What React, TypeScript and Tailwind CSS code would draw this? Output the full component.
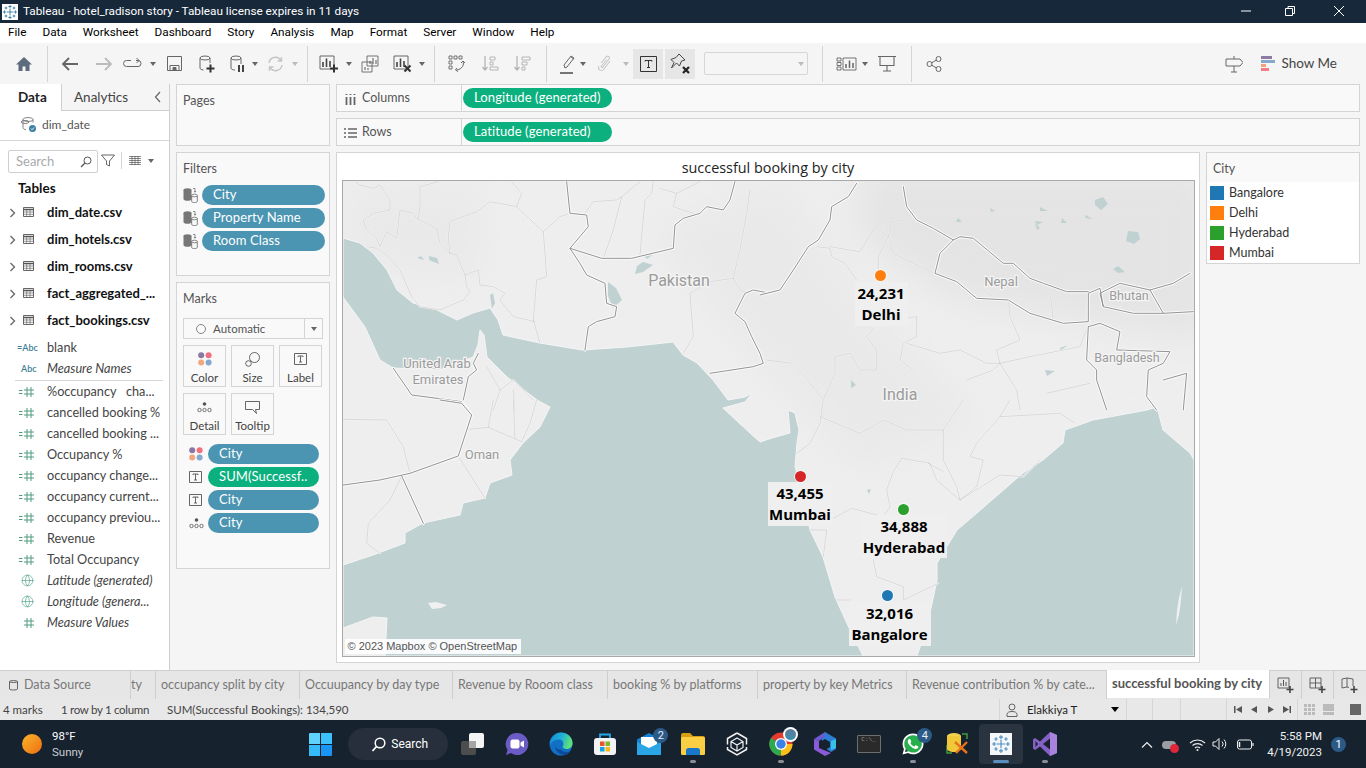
import type { ReactNode } from "react";
import { Globe } from "lucide-react";
import { FaWhatsapp } from "react-icons/fa";

const ui = "font-['Lato','Open_Sans',sans-serif]";
const win = "font-['Roboto','Open_Sans',sans-serif]";

function Icon({ w = 20, h = 20, box, className = "", children }: { w?: number; h?: number; box?: string; className?: string; children: ReactNode }) {
  return (
    <svg width={w} height={h} viewBox={box || `0 0 ${w} ${h}`} fill="none" stroke="currentColor" className={"shrink-0 " + className}>
      {children}
    </svg>
  );
}

function Caret({ light }: { light?: boolean }) {
  return <div className={"w-0 h-0 border-x-[3.5px] border-x-transparent border-t-[4px] " + (light ? "border-t-[#bbb]" : "border-t-[#666]")} />;
}

function Sep({ className = "" }: { className?: string }) {
  return <div className={"w-px h-[36px] bg-[#d4d4d4] " + className} />;
}

function TableauMark({ size = 16, color = "#3b7ea1" }: { size?: number; color?: string }) {
  const pts: [number, number, number][] = [[8, 8, 3.4], [8, 2.5, 1.6], [8, 13.5, 1.6], [2.5, 8, 1.6], [13.5, 8, 1.6], [4, 4, 1.4], [12, 4, 1.4], [4, 12, 1.4], [12, 12, 1.4]];
  return (
    <svg width={size} height={size} viewBox="0 0 16 16" stroke={color} strokeWidth="0.9">
      {pts.map(([x, y, r], i) => (
        <path key={i} d={`M${x - r} ${y}H${x + r}M${x} ${y - r}V${y + r}`} />
      ))}
    </svg>
  );
}

function TitleBar() {
  return (
    <div className={"h-[23px] bg-[#17283a] flex items-center text-white text-[11.75px] " + win}>
      <div className="ml-[2px] w-[16px] h-[16px] bg-white flex items-center justify-center">
        <TableauMark />
      </div>
      <span className="ml-[5px]">Tableau - hotel_radison story - Tableau license expires in 11 days</span>
      <div className="ml-auto flex items-center text-white">
        <Icon w={46} h={23}><path d="M13 11h10" /></Icon>
        <Icon w={46} h={23}><path d="M11.5 8.5h7v7h-7zM14 8.5v-2h6.5v7h-2" /></Icon>
        <Icon w={46} h={23}><path d="M14 6l10 10M24 6L14 16" /></Icon>
      </div>
    </div>
  );
}

function MenuBar() {
  const items = ["File", "Data", "Worksheet", "Dashboard", "Story", "Analysis", "Map", "Format", "Server", "Window", "Help"];
  return (
    <div className={"h-[20px] bg-white flex items-center gap-[16px] pl-[8px] text-[11.75px] text-black " + win}>
      {items.map((m) => (
        <span key={m}>{m}</span>
      ))}
    </div>
  );
}

function Plus({ x, y }: { x: number; y: number }) {
  return <path d={`M${x - 4} ${y}h8M${x} ${y - 4}v8`} stroke="#333" strokeWidth="2" />;
}

function Toolbar() {
  return (
    <div className="h-[41px] bg-[#f5f5f5] flex items-center text-[#666] pl-[15px]">
      <Icon w={18} h={18}><path d="M9 2L1 9.5h2.5V16h4v-4.5h3V16h4V9.5H17z" fill="#5d6b7c" stroke="none" /></Icon>
      <Sep className="ml-[14px]" />
      <Icon w={18} h={16} className="ml-[13px]"><path d="M17 8H2M8 2L2 8l6 6" strokeWidth="1.8" /></Icon>
      <Icon w={18} h={16} className="ml-[16px] text-[#bbb]"><path d="M1 8h15M10 2l6 6-6 6" strokeWidth="1.8" /></Icon>
      <Icon w={20} h={14} className="ml-[10px]"><path d="M8 3.5H3.5a3 3 0 000 6H15a3 3 0 000-6h-2M13.5 1l2.5 2.5L13.5 6" /></Icon>
      <div className="ml-[7px]"><Caret /></div>
      <Icon w={17} h={17} className="ml-[10px]"><path d="M1.5 1.5h14v14h-14zM4 15.5v-5h9v5" /><path d="M7 12.5h3v3H7z" fill="currentColor" /></Icon>
      <Icon w={17} h={18} className="ml-[15px]"><ellipse cx="7" cy="3" rx="5" ry="2" /><path d="M2 3v10c0 1 1.5 2 3.5 2M12 3v5" /><Plus x={12.5} y={13.5} /></Icon>
      <Icon w={17} h={18} className="ml-[14px]"><ellipse cx="7" cy="3" rx="5" ry="2" /><path d="M2 3v10c0 1 1.5 2 4 2M12 3v6" /><path d="M10 10v7M14 10v7" stroke="#444" strokeWidth="2" /></Icon>
      <div className="ml-[6px]"><Caret /></div>
      <Icon w={17} h={16} className="ml-[9px] text-[#c4c4c4]"><path d="M2 7a6.5 6.5 0 0112-2.5M15 9a6.5 6.5 0 01-12 2.5M14.5 1v4h-4M2.5 15v-4h4" strokeWidth="1.4" /></Icon>
      <div className="ml-[8px]"><Caret light /></div>
      <Sep className="ml-[9px]" />
      <Icon w={20} h={19} className="ml-[11px]"><path d="M1 2h14v13H1z" /><path d="M4 13V8M7.5 13V4.5M11 13V7" stroke="#444" strokeWidth="1.6" /><Plus x={15} y={14.5} /></Icon>
      <div className="ml-[7px]"><Caret /></div>
      <Icon w={18} h={18} className="ml-[9px]"><path d="M6 1h11v10H6zM1 7h10v10H1z" strokeWidth="0.9" /><path d="M9 9V6M12 9V3M15 9V5M4 15v-3M7 15v-2" strokeWidth="1.1" /></Icon>
      <Icon w={20} h={19} className="ml-[14px]"><path d="M1 2h14v13H1z" /><path d="M4 13V8M7.5 13V4.5M11 13V7" stroke="#444" strokeWidth="1.6" /><path d="M11.5 11.5l6 6M17.5 11.5l-6 6" stroke="#333" strokeWidth="2" /></Icon>
      <div className="ml-[6px]"><Caret /></div>
      <Sep className="ml-[9px]" />
      <Icon w={18} h={17} className="ml-[13px]" box="0 0 18 17"><path d="M1 1h3v3H1zM6 1h3v3H6zM11 1h3v3h-3zM1 6h3v3H1zM1 11h3v3H1z" strokeWidth="0.9" /><path d="M15 6c1.5 4-1 8-6 9M9 13l-1.5 2L10 16.5M13 8l2-2 2 2" strokeWidth="1" /></Icon>
      <Icon w={18} h={17} className="ml-[15px] text-[#b0b0b0]"><path d="M4 1v14M1.5 12L4 15l2.5-3" strokeWidth="1.2" /><path d="M9 2h5v3H9zM9 7h3v3H9zM9 12h8v3H9z" strokeWidth="0.9" /></Icon>
      <Icon w={18} h={17} className="ml-[14px] text-[#b0b0b0]"><path d="M4 1v14M1.5 12L4 15l2.5-3" strokeWidth="1.2" /><path d="M9 2h8v3H9zM9 7h5v3H9zM9 12h3v3H9z" strokeWidth="0.9" /></Icon>
      <Sep className="ml-[15px]" />
      <Icon w={16} h={20} className="ml-[13px]"><path d="M5 14L4 11 11 2l3 2-7 9zM11 3l2.5 2" strokeWidth="1" /><path d="M0 19h13" stroke="#555" strokeWidth="1.6" /></Icon>
      <div className="ml-[4px]"><Caret /></div>
      <Icon w={14} h={20} className="ml-[11px] text-[#c8c8c8]"><path d="M4 9l5-6c2-2 4.500 0 3 2l-6 8c-1 1-2.500 0-1.500-1l5-6.500M2 12c-2 4 3 6 5 3l6-8" strokeWidth="1.1" /></Icon>
      <div className="ml-[12px]"><Caret light /></div>
      <div className="ml-[4px] w-[30px] h-[30px] bg-[#e6e6e6] flex items-center justify-center text-[#333]">
        <Icon w={17} h={16}><path d="M.5.5h16v15H.5z" /><path d="M5 5.500V4.500h7v1M8.500 4.500v7M7 11.500h3" /></Icon>
      </div>
      <div className="ml-[2px] w-[30px] h-[30px] bg-[#e6e6e6] flex items-center justify-center text-[#333]">
        <Icon w={22} h={22}><path d="M10 1l6 6-3.500 1-2 5-3-3L2.500 15l2.500-5.500-3-3 5-2z" strokeWidth="0.9" /><path d="M14 14l6 6M20 14l-6 6" stroke="#222" strokeWidth="2.200" /></Icon>
      </div>
      <div className="ml-[9px] w-[104px] h-[23px] border border-[#d6d6d6] rounded-[2px] flex items-center justify-end pr-[3px]">
        <Caret light />
      </div>
      <Sep className="ml-[14px]" />
      <Icon w={21} h={14} className="ml-[13px]"><path d="M1 1h4v3H1zM1 5.500h4v3H1zM1 10h4v3H1z" strokeWidth="0.9" /><path d="M7 1h13v12H7z" strokeWidth="0.9" /><path d="M10 11V7M13.500 11V3.500M17 11V6" strokeWidth="1.500" /></Icon>
      <div className="ml-[5px]"><Caret /></div>
      <Icon w={18} h={17} className="ml-[10px]"><path d="M0 1.500h18M2 1.500v9h14v-9M9 10.500v5M5 16h8" strokeWidth="1.100" /></Icon>
      <Sep className="ml-[15px]" />
      <Icon w={16} h={16} className="ml-[14px]"><circle cx="3.500" cy="8" r="2.500" /><circle cx="12.500" cy="3" r="2.500" /><circle cx="12.500" cy="13" r="2.500" /><path d="M5.700 6.800l4.700-2.700M5.700 9.200l4.700 2.700" /></Icon>
      <div className="ml-auto flex items-center pr-[29px]">
        <Icon w={18} h={18}><path d="M1 4h14l3 3.500L15 11H1zM9 1v3M9 11v6M6 17h6" strokeWidth="1" /></Icon>
        <div className="ml-[18px] flex flex-col gap-[1px]">
          <div className="w-[11px] h-[3px] bg-[#8e7ba3]" />
          <div className="w-[14px] h-[3px] bg-[#85a8cf]" />
          <div className="w-[5px] h-[3px] bg-[#f3a37c]" />
          <div className="w-[8px] h-[3px] bg-[#f27b85]" />
        </div>
        <span className={"ml-[6px] text-[13.5px] text-[#444] " + ui}>Show Me</span>
      </div>
    </div>
  );
}

function Hash({ eq = true }: { eq?: boolean }) {
  return (
    <Icon w={18} h={12} className="text-[#4f9c7d]">
      {eq && <path d="M1 4.500h3.500M1 7.500h3.500" strokeWidth="1" />}
      <path d="M6 4h10M6 8h10M9 1v10M13 1v10" strokeWidth="1" />
    </Icon>
  );
}

function TableIcon() {
  return (
    <Icon w={12} h={11} className="text-[#555]">
      <path d="M.5.5h10v9H.5z" strokeWidth="0.9" />
      <path d="M.5 2.500h10" strokeWidth="1.500" />
      <path d="M.5 5h10M.5 7.300h10M3.700 2v7M7 2v7" strokeWidth="0.6" />
    </Icon>
  );
}

function TableRow({ name }: { name: string }) {
  return (
    <div className="h-[27px] flex items-center">
      <Icon w={7} h={10} className="ml-[9px] text-[#666]"><path d="M1.500 1L5.500 5l-4 4" strokeWidth="1.300" /></Icon>
      <div className="ml-[7px]"><TableIcon /></div>
      <span className="ml-[12px] text-[13px] font-bold text-[#111] whitespace-nowrap">{name}</span>
    </div>
  );
}

function FieldRow({ icon, name, italic }: { icon: ReactNode; name: string; italic?: boolean }) {
  return (
    <div className="h-[21px] flex items-center">
      <div className="w-[47px] pl-[18px] flex items-center">{icon}</div>
      <span className={"text-[12.7px] text-[#444] whitespace-pre " + (italic ? "italic" : "")}>{name}</span>
    </div>
  );
}

function DataPane() {
  const measures = ["cancelled booking %", "cancelled booking ...", "Occupancy %", "occupancy change...", "occupancy current...", "occupancy previou...", "Revenue", "Total Occupancy"];
  const globe = <Globe size={13} className="ml-[3px] text-[#5aa68a]" strokeWidth={1.300} />;
  return (
    <div className={"w-[170px] bg-white border-r border-[#cfcfcf] flex flex-col shrink-0 overflow-hidden " + ui}>
      <div className="h-[27px] flex text-[13.5px]">
        <div className="w-[61px] pl-[18px] flex items-center font-bold text-[#222]">Data</div>
        <div className="flex-1 bg-[#f5f5f5] border-l border-b border-[#cfcfcf] flex items-center pl-[12px] text-[#444]">
          Analytics
          <Icon w={8} h={12} className="ml-auto mr-[7px] text-[#666]"><path d="M6 1L1.500 6 6 11" strokeWidth="1.200" /></Icon>
        </div>
      </div>
      <div className="h-[30px] pb-[2px] border-b border-[#d6d6d6] flex items-center pl-[20px] text-[12px] text-[#555]">
        <Icon w={17} h={17} className="text-[#777]"><ellipse cx="8" cy="3.500" rx="5" ry="2" strokeWidth="0.9" /><path d="M3 3.500v8c0 1 1 2 3 2M13 3.500v3" strokeWidth="0.9" /><ellipse cx="5" cy="6" rx="4" ry="1.500" strokeWidth="0.9" /><circle cx="12.500" cy="12.500" r="3.500" fill="#3f7fa6" stroke="none" /><path d="M10.800 12.500l1.300 1.300 2-2.300" stroke="#fff" strokeWidth="0.9" /></Icon>
        <span className="ml-[5px]">dim_date</span>
      </div>
      <div className="h-[31px] mt-[9px] -mb-[2px] flex items-start text-[#666]">
        <div className="ml-[8px] w-[90px] h-[23px] border border-[#cfcfcf] rounded-[2px] flex items-center pl-[7px] pr-[5px] text-[13px] text-[#aaa]">
          Search
          <Icon w={12} h={12} className="ml-auto text-[#555]"><circle cx="7.500" cy="4.500" r="3.500" /><path d="M5 7l-4 4" strokeWidth="1.300" /></Icon>
        </div>
        <Icon w={14} h={13} className="ml-[3px] mt-[4px]"><path d="M.5 1h13L8.500 7v5l-3-1.500V7z" strokeWidth="1" /></Icon>
        <div className="ml-[6px] mt-[2px] w-px h-[17px] bg-[#d4d4d4]" />
        <Icon w={12} h={9} className="ml-[7px] mt-[6px] text-[#555]"><path d="M0 .5h12M0 2.500h12M0 4.500h12M0 6.500h12M0 8.500h12M3 0v9M6 0v9M9 0v9" strokeWidth="0.7" /></Icon>
        <div className="ml-[7px] mt-[9px]"><Caret /></div>
      </div>
      <div className="h-[18px] pl-[18px] text-[13.5px] font-bold text-[#111] flex items-center">Tables</div>
      <div className="mt-[2px]">
        {["dim_date.csv", "dim_hotels.csv", "dim_rooms.csv", "fact_aggregated_...", "fact_bookings.csv"].map((t) => (
          <TableRow key={t} name={t} />
        ))}
      </div>
      <div className="mt-[3px]">
        <FieldRow icon={<span className="text-[9px] -ml-[1px] text-[#3f7f96] font-semibold">=Abc</span>} name="blank" />
        <FieldRow icon={<span className="text-[9px] ml-[3px] text-[#3f7f96] font-semibold">Abc</span>} name="Measure Names" italic />
      </div>
      <div className="ml-[15px] mr-[6px] mt-[1px] h-px bg-[#d6d6d6]" />
      <FieldRow icon={<Hash />} name="%occupancy   cha..." />
      {measures.map((m) => (
        <FieldRow key={m} icon={<Hash />} name={m} />
      ))}
      <FieldRow icon={globe} name="Latitude (generated)" italic />
      <FieldRow icon={globe} name="Longitude (genera..." italic />
      <FieldRow icon={<Hash eq={false} />} name="Measure Values" italic />
    </div>
  );
}

function Pill({ green, className = "", children }: { green?: boolean; className?: string; children: ReactNode }) {
  return (
    <div className={"h-[20px] rounded-full flex items-center pl-[11px] text-[13px] tracking-[0.1px] text-white whitespace-nowrap " + (green ? "bg-[#0bb07e] " : "bg-[#4b95b2] ") + className}>
      {children}
    </div>
  );
}

function MarkButton({ label, children }: { label: string; children: ReactNode }) {
  return (
    <div className="w-[43px] h-[42px] border border-[#d4d4d4] flex flex-col items-center text-[11.5px] text-[#444]">
      <div className="h-[24px] mt-[1px] flex items-center justify-center">{children}</div>
      <span className="leading-[13px]">{label}</span>
    </div>
  );
}

function ColorDots({ size = 6 }: { size?: number }) {
  return (
    <svg width={14} height={14} viewBox="0 0 14 14">
      <circle cx="3.200" cy="3.200" r={size / 2} fill="#8c76a3" />
      <circle cx="10.600" cy="3.200" r={size / 2} fill="#f0707f" />
      <circle cx="3.200" cy="10.600" r={size / 2} fill="#f3a77f" />
      <circle cx="10.600" cy="10.600" r={size / 2} fill="#85a8cf" />
    </svg>
  );
}

function DetailDots() {
  return (
    <Icon w={15} h={11} className="text-[#555]">
      <circle cx="7.500" cy="2" r="1.800" fill="#555" stroke="none" />
      <circle cx="2.500" cy="8" r="1.700" strokeWidth="0.8" />
      <circle cx="7.500" cy="8" r="1.700" strokeWidth="0.8" />
      <circle cx="12.500" cy="8" r="1.700" strokeWidth="0.8" />
    </Icon>
  );
}

function TBox() {
  return (
    <Icon w={13} h={12} className="text-[#555]">
      <path d="M.5.5h12v11H.5z" strokeWidth="0.9" />
      <path d="M4 4V3h5v1M6.500 3v6M5 9h3" strokeWidth="0.9" />
    </Icon>
  );
}

function DbFilter() {
  return (
    <Icon w={15} h={16} className="text-[#666] -mt-[1px]">
      <ellipse cx="4.500" cy="3" rx="4" ry="1.800" fill="#777" stroke="none" />
      <path d="M.5 3h8v9c0 1-1.500 1.800-4 1.800S.5 13 .5 12z" fill="#777" stroke="none" />
      <ellipse cx="11.500" cy="8.500" rx="2.800" ry="1.300" strokeWidth="0.8" />
      <path d="M8.700 8.500v6c0 .8 1.300 1 2.800 1s2.800-.2 2.800-1v-6" strokeWidth="0.8" />
      <path d="M10 1.500h2V5M11 4l1 1.300L13 4" strokeWidth="0.7" />
    </Icon>
  );
}

function Card({ title, className = "", children }: { title: string; className?: string; children?: ReactNode }) {
  return (
    <div className={"border border-[#d4d4d4] bg-[#f9f9f9] pl-[6px] " + className}>
      <div className="mt-[8px] h-[17px] text-[12.5px] text-[#555] flex items-center">{title}</div>
      {children}
    </div>
  );
}

function ShelfPanel() {
  return (
    <div className={"w-[154px] flex flex-col shrink-0 ml-[6px] " + ui}>
      <Card title="Pages" className="h-[62px]" />
      <Card title="Filters" className="h-[124px] mt-[6px]">
        <div className="mt-[7px] flex flex-col gap-[3px]">
          {["City", "Property Name", "Room Class"].map((f) => (
            <div key={f} className="flex items-center">
              <DbFilter />
              <Pill className="ml-[4px] w-[123px]">{f}</Pill>
            </div>
          ))}
        </div>
      </Card>
      <Card title="Marks" className="h-[287px] mt-[6px]">
        <div className="mt-[10px] w-[140px] h-[21px] border border-[#d4d4d4] flex items-center text-[11.5px] text-[#555]">
          <div className="ml-[12px] w-[10px] h-[10px] rounded-full border border-[#888]" />
          <span className="ml-[7px]">Automatic</span>
          <div className="ml-auto w-[18px] h-full border-l border-[#d4d4d4] flex items-center justify-center"><Caret /></div>
        </div>
        <div className="mt-[6px] flex gap-[5px]">
          <MarkButton label="Color"><ColorDots /></MarkButton>
          <MarkButton label="Size">
            <Icon w={15} h={15} className="text-[#555]"><circle cx="9.500" cy="5.500" r="5" strokeWidth="0.9" /><circle cx="3.500" cy="11.500" r="2.800" strokeWidth="0.9" /></Icon>
          </MarkButton>
          <MarkButton label="Label"><TBox /></MarkButton>
        </div>
        <div className="mt-[6px] flex gap-[5px]">
          <MarkButton label="Detail"><DetailDots /></MarkButton>
          <MarkButton label="Tooltip">
            <Icon w={15} h={13} className="text-[#555]"><path d="M.5.5h14v8h-4l1 4-4-4H.5z" strokeWidth="0.9" /></Icon>
          </MarkButton>
        </div>
        <div className="mt-[9px] flex flex-col gap-[3px]">
          <MarkPill icon={<ColorDots />}>City</MarkPill>
          <MarkPill icon={<TBox />} green>SUM(Successf..</MarkPill>
          <MarkPill icon={<TBox />}>City</MarkPill>
          <MarkPill icon={<DetailDots />}>City</MarkPill>
        </div>
      </Card>
    </div>
  );
}

function MarkPill({ icon, green, children }: { icon: ReactNode; green?: boolean; children: ReactNode }) {
  return (
    <div className="flex items-center">
      <div className="w-[25px] pl-[6px] flex items-center">{icon}</div>
      <Pill green={green} className="w-[111px]">{children}</Pill>
    </div>
  );
}

function Shelf({ label, pill, icon }: { label: string; pill: string; icon: ReactNode }) {
  return (
    <div className="h-[28px] border border-[#d4d4d4] bg-[#f9f9f9] flex text-[12.5px] text-[#555]">
      <div className="w-[125px] border-r border-[#d4d4d4] flex items-center pl-[6px] pt-[1px]">
        <div className="w-[15px] flex justify-center text-[#666]">{icon}</div>
        <span className="ml-[4px]">{label}</span>
      </div>
      <Pill green className="ml-[1px] mt-[3px] w-[149px]">{pill}</Pill>
    </div>
  );
}

function Lines({ x, y, thick = [], thin = [] }: { x: number; y: number; thick?: string[]; thin?: string[] }) {
  return (
    <g transform={`translate(${x} ${y}) scale(0.3333)`} fill="none" strokeLinejoin="round" strokeLinecap="round">
      {thin.map((d, i) => <path key={"ha" + i} d={d} stroke="#f5f5f5" strokeWidth="5" />)}
      {thin.map((d, i) => <path key={"a" + i} d={d} stroke="#c4c4c4" strokeWidth="1.800" />)}
      {thick.map((d, i) => <path key={"hb" + i} d={d} stroke="#fafafa" strokeWidth="9" />)}
      {thick.map((d, i) => <path key={"b" + i} d={d} stroke="#939393" strokeWidth="3" />)}
    </g>
  );
}

function MapLabel({ x, y, size = 13, children }: { x: number; y: number; size?: number; children: string }) {
  return (
    <text x={x} y={y} textAnchor="middle" fontSize={size} fontFamily="Roboto, sans-serif" fill="#9b9b9b" stroke="#f4f4f4" strokeWidth="2.500" className="[paint-order:stroke]">
      {children}
    </text>
  );
}

function MapDrawing() {
  const arabian = "343,238 360,243 373,253 387,270 397,290 413,303 437,310 457,320 473,313 490,308 498,320 503,335 540,343 582,350 627,347 673,342 683,355 697,363 713,380 728,400 745,397 752,393 745,402 723,408 750,433 760,442 772,438 790,433 788,410 795,413 799,430 797,443 795,467 803,493 810,530 823,557 835,597 850,630 863,656 385,656 387,618 373,617 343,628 343,565 373,555 405,543 405,533 423,523 460,515 463,503 485,498 490,483 512,475 510,460 523,443 540,427 550,407 537,400 507,377 487,357 484,335 480,330 478,345 473,357 440,370 393,368 380,360 365,327 343,297";
  const bengal = "917,656 927,627 937,580 937,563 957,530 977,513 1000,493 1023,473 1043,460 1063,443 1065,430 1093,420 1147,410 1157,407 1163,430 1190,453 1194,460 1194,656";
  return (
    <svg width={851} height={475} viewBox="343 181 851 475" className="block">
      <defs>
        <filter id="soft" x="-20%" y="-20%" width="140%" height="140%"><feGaussianBlur stdDeviation="18" /></filter>
      </defs>
      <rect x="343" y="181" width="851" height="475" fill="#eeeeee" />
      <g filter="url(#soft)">
        <polygon points="860,170 1210,170 1210,340 1080,320 960,300 860,240" fill="#e4e4e4" />
        <polygon points="650,230 780,180 860,300 980,420 860,470 740,340" fill="#e9e9e9" />
        <polygon points="350,190 480,190 480,280 350,260" fill="#e9e9e9" />
      </g>
      <polygon points={arabian} fill="#c0d1d2" stroke="#f5f5f5" strokeWidth="1" />
      <polygon points={bengal} fill="#c0d1d2" stroke="#f5f5f5" strokeWidth="1" />
      <path d="M428 603l8-1 11 3-6 3-9 1zM1176 625l1-15 2-12 3-12-1 14-2 15zM1130 400l3-4 2 3-2 3z" fill="#f0f0f0" />
      <g fill="#c0d1d2">
        <path d="M608 282l8 6 6 12-9 8-5-12zM643 255l12-2-8 6zM429 256l8 2 2 6-10-4zM643 262l10 3-10 7-8 2 2-8z" />
        <path d="M1095 200l8-3 5 7-7 6-6-5zM1128 231l10 1 2 7-6 5-8-3zM990 208l5 3-4 1zM1035 221l8 1-6 3zM1035 223l5 5-3 2zM1062 218l5 5-6 0zM1086 215l6 4-7-1zM1040 207l8 4-8 0zM1113 269l5-3 7 6-7 1zM958 218l4 4-6 0zM1060 348l8-3-8 6z" />
        <path d="M490 295l3-2 2 10-3 6zM417 258l4-2 3 4zM851 380l5 5-5 3zM867 490l4-1-2 5zM1045 370l10 1-8 5z" />
      </g>
      <Lines
        x={340}
        y={150}
        thick={[
          "M680 95L690 190 740 195 745 230 690 295 785 325 875 325 1000 295 1005 225 1030 205 1080 190 1100 170 1150 180 1170 150 1185 95",
          "M690 295L720 340 740 375 795 400 800 460 830 470 825 500 770 515 745 530 735 600",
          "M1290 430L1240 420 1215 430 1185 490 1215 515 1235 560 1260 610 1270 640 1240 650 1110 670",
          "M160 655L215 735 365 755 395 795",
          "M370 750L385 680 410 660 400 640 415 610",
        ]}
        thin={[
          "M45 95L60 105 100 115 120 105 150 150 150 180 100 190 70 210 80 240 110 265 120 290 140 245 170 265 180 180 220 190 230 205 290 235 300 280 330 310",
          "M295 95L240 110 240 170 235 205",
          "M330 310L325 260 330 215 410 185 450 155 530 170 610 245 660 200 690 190",
          "M515 95L545 130 530 170",
          "M610 245L620 380 590 390 580 510 600 580",
          "M330 310L350 315 375 375 415 360 420 405 460 410 495 430 480 450 520 500 585 515",
          "M375 375L380 410 390 425 370 450 300 480 240 470 215 440 180 360 140 315 110 295 80 290",
          "M735 190L760 155 830 150 845 140 900 95",
          "M845 140L820 240 790 325",
          "M940 95L935 130 915 150 900 315",
          "M960 115L1010 130 1000 170 1060 190 M1010 130L1080 95",
          "M1230 120L1220 190 1200 300 1190 340 1180 385 1110 395 1050 430 1060 560 1030 610",
          "M1180 385L1200 420 1215 425",
          "M440 650L480 720 520 690 580 750 M480 720L460 780 M520 720L525 790",
        ]}
      />
      <Lines
        x={340}
        y={400}
        thick={["M10 255L120 240 210 220 355 168 395 45 365 10 300 0", "M185 228L250 370"]}
        thin={["M10 58L140 60 190 140 210 220", "M355 168L435 295", "M385 88L445 82 545 125", "M445 82L460 0", "M525 115L520 0", "M545 125L570 70 590 0", "M185 228L150 300 85 370 80 430 120 460"]}
      />
      <Lines
        x={760}
        y={150}
        thick={[
          "M0 435L60 420 100 360 145 290 175 270 210 210 215 170 265 140 290 100",
          "M430 110L440 170 470 210 520 235 580 270 540 310 525 370 590 395 650 445 745 450 810 490 910 520 985 515 985 430 1020 415 1030 470 1120 490 1210 490 1300 485",
          "M1030 470L1020 430 1080 400 1170 420 1210 490",
          "M580 270L600 260 640 265 730 340 760 340 810 385 850 400 920 425 985 425",
          "M1170 420L1240 400 1290 370",
          "M985 530L980 630 1010 660 1010 690 1040 780",
          "M985 530L1020 520 1080 545 1070 600 1230 605 1210 640 1165 660 1160 740 1190 780",
          "M1210 690L1280 670 1270 780",
        ]}
        thin={[
          "M210 290L300 305 345 230 385 260 355 320 355 360",
          "M385 260L395 215 440 210",
          "M170 290L210 295 215 320 255 340 290 390",
          "M390 280L400 310 470 345 525 370",
          "M410 510L470 500 470 560 430 580 420 630 460 660",
          "M345 530L320 560 350 600 350 660 300 660 270 610 225 620 225 670 190 750 135 680 95 640 20 630",
          "M440 580L540 610 600 600 680 640 720 640 810 620 960 590 980 540",
          "M720 640L710 600 780 570 750 500 745 450",
          "M620 690L700 660 720 640 770 720 780 780",
          "M860 730L990 700",
          "M870 430L880 510 M700 440L680 430 M1080 470L1100 490",
        ]}
      />
      <Lines
        x={760}
        y={400}
        thin={[
          "M190 0L180 70 150 130 110 160",
          "M180 50L300 100 370 60 440 90 550 90 550 180 590 260 600 300",
          "M550 90L590 30 610 0",
          "M750 0L720 50 650 130 630 170 670 180 650 260 600 300 720 225 790 230 840 180",
          "M425 175L510 190 530 240 600 300",
          "M425 175L400 215 380 270 390 320 370 350 275 325 210 360",
          "M505 190L550 215",
          "M340 480L350 530 430 560 430 600 535 550",
          "M270 600L230 600",
          "M150 390L200 390 190 470",
          "M720 50L900 40 945 70",
        ]}
      />
      <MapLabel x={679} y={286} size={16}>Pakistan</MapLabel>
      <MapLabel x={1001} y={286}>Nepal</MapLabel>
      <MapLabel x={1129} y={300} size={12.500}>Bhutan</MapLabel>
      <MapLabel x={1127} y={362} size={12.500}>Bangladesh</MapLabel>
      <MapLabel x={900} y={400} size={16}>India</MapLabel>
      <MapLabel x={437} y={368}>United Arab</MapLabel>
      <MapLabel x={438} y={384}>Emirates</MapLabel>
      <MapLabel x={482} y={459}>Oman</MapLabel>
    </svg>
  );
}

function Pin({ className }: { className: string }) {
  return <div className={"absolute w-[11px] h-[11px] rounded-full ring-1 ring-white/70 " + className} />;
}

function CityLabel({ value, city, className }: { value: string; city: string; className: string }) {
  return (
    <div className={"absolute bg-[#efefef] flex flex-col items-center justify-center text-[15px] leading-[21px] font-bold text-black font-['Open_Sans',sans-serif] " + className}>
      <span>{value}</span>
      <span>{city}</span>
    </div>
  );
}

function Viz() {
  return (
    <div className="w-[864px] h-[511px] border border-[#d4d4d4] bg-white shrink-0 flex flex-col items-center">
      <div className="h-[27px] pt-[6px] text-[14.4px] leading-[18px] text-[#222] font-['Open_Sans',sans-serif]">successful booking by city</div>
      <div className="relative border border-[#a9a9a9] w-[853px] h-[477px]">
        <MapDrawing />
        <div className="absolute left-[2px] top-[458px] w-[176px] h-[15px] bg-white/90 flex items-center pl-[3px] text-[11px] text-[#555] font-['Liberation_Sans',sans-serif]">© 2023 Mapbox © OpenStreetMap</div>
        <CityLabel value="24,231" city="Delhi" className="left-[512px] top-[101px] w-[53px] h-[44px]" />
        <CityLabel value="43,455" city="Mumbai" className="left-[425px] top-[301px] w-[65px] h-[44px]" />
        <CityLabel value="34,888" city="Hyderabad" className="left-[519px] top-[334px] w-[85px] h-[43px]" />
        <CityLabel value="32,016" city="Bangalore" className="left-[506px] top-[421px] w-[82px] h-[44px]" />
        <Pin className="left-[532px] top-[89px] bg-[#ff7f0e]" />
        <Pin className="left-[452px] top-[290px] bg-[#d62728]" />
        <Pin className="left-[555px] top-[323px] bg-[#2ca02c]" />
        <Pin className="left-[539px] top-[409px] bg-[#1f77b4]" />
      </div>
    </div>
  );
}

function Legend() {
  const rows: [string, string][] = [["Bangalore", "bg-[#1f77b4]"], ["Delhi", "bg-[#ff7f0e]"], ["Hyderabad", "bg-[#2ca02c]"], ["Mumbai", "bg-[#d62728]"]];
  return (
    <div className={"w-[154px] h-[112px] border border-[#d4d4d4] bg-white shrink-0 ml-[6px] " + ui}>
      <div className="h-[29px] pt-[3px] bg-[#f9f9f9] pl-[6px] flex items-center text-[12.5px] text-[#555]">City</div>
      <div className="pl-[3px] pt-[1px]">
        {rows.map(([name, c]) => (
          <div key={name} className="h-[20px] flex items-center text-[12.5px] text-[#333]">
            <div className={"w-[14px] h-[14px] " + c} />
            <span className="ml-[5px]">{name}</span>
          </div>
        ))}
      </div>
    </div>
  );
}

function Workspace() {
  return (
    <div className={"flex-1 ml-[6px] mr-[6px] min-w-0 flex flex-col " + ui}>
      <Shelf
        label="Columns"
        pill="Longitude (generated)"
        icon={<Icon w={11} h={12}><path d="M1.500 4v8M5.500 4v8M9.500 4v8M1.500 1v1M5.500 1v1M9.500 1v1" strokeWidth="1.800" /></Icon>}
      />
      <div className="mt-[6px]">
        <Shelf
          label="Rows"
          pill="Latitude (generated)"
          icon={<Icon w={13} h={10}><path d="M4 1h9M4 5h9M4 9h9M0 1h2M0 5h2M0 9h2" strokeWidth="1.500" /></Icon>}
        />
      </div>
      <div className="mt-[6px] flex items-start">
        <Viz />
        <Legend />
      </div>
    </div>
  );
}

function Tab({ w, active, children }: { w: string; active?: boolean; children: ReactNode }) {
  return (
    <div className={"h-full flex items-center pl-[5px] whitespace-nowrap shrink-0 overflow-hidden border-r border-[#cfcfcf] " + w + (active ? " bg-white font-bold text-[#555] text-[13px] -mt-px pb-[1px]" : " text-[#777]")}>
      {children}
    </div>
  );
}

function TabStrip() {
  return (
    <div className={"h-[30px] bg-[#e6e6e6] border-y border-[#cfcfcf] flex text-[12.5px] " + ui}>
      <Tab w="w-[131px] !pl-[9px]">
        <Icon w={9} h={12} className="text-[#555]"><path d="M.5 2.500C.5 1.300 8.500 1.300 8.500 2.500V10c0 1.300-8 1.300-8 0zM.5 2.500c0 1.300 8 1.300 8 0" strokeWidth="0.9" /></Icon>
        <span className="ml-[6px]">Data Source</span>
      </Tab>
      <Tab w="w-[25px] !pl-0">ty</Tab>
      <Tab w="w-[144px]">occupancy split by city</Tab>
      <Tab w="w-[153px]">Occuupancy by day type</Tab>
      <Tab w="w-[155px]">Revenue by Rooom class</Tab>
      <Tab w="w-[150px]">booking % by platforms</Tab>
      <Tab w="w-[149px]">property by key Metrics</Tab>
      <Tab w="w-[200px]">Revenue contribution % by cate...</Tab>
      <Tab w="w-[163px]" active>successful booking by city</Tab>
      <Tab w="w-[32px] justify-center !pl-0"><Icon w={18} h={17} className="text-[#555]"><path d="M1 1h11v10H1z" strokeWidth="0.9" /><path d="M4 9V6M6.500 9V3M9 9V5" strokeWidth="1" /><path d="M13 9v7M9.500 12.500h7" stroke="#444" strokeWidth="1.600" /></Icon></Tab>
      <Tab w="w-[32px] justify-center !pl-0"><Icon w={18} h={17} className="text-[#555]"><path d="M1 1h11v10H1zM6.500 1v10M1 6h11" strokeWidth="0.9" /><path d="M13 9v7M9.500 12.500h7" stroke="#444" strokeWidth="1.600" /></Icon></Tab>
      <Tab w="flex-1 justify-center !pl-0 !border-r-0"><Icon w={18} h={17} className="text-[#555]"><path d="M1 2l5-1v9l-5 1zM6 1l6 1v7M6 10l2 .5" strokeWidth="0.9" /><path d="M13 9v7M9.500 12.500h7" stroke="#444" strokeWidth="1.600" /></Icon></Tab>
    </div>
  );
}

function NavIcon({ d }: { d: string }) {
  return <Icon w={9} h={9} className="text-[#555]"><path d={d} fill="#555" stroke="none" /></Icon>;
}

function StatusBar() {
  return (
    <div className={"h-[21px] -mt-px bg-[#e8e8e8] flex items-center text-[11.5px] text-[#444] " + ui}>
      <span className="ml-[3px] w-[58px]">4 marks</span>
      <span className="w-[106px] tracking-[-0.3px]">1 row by 1 column</span>
      <span>SUM(Successful Bookings): 134,590</span>
      <div className="ml-auto flex h-full">
        <div className="w-[128px] border-x border-[#d6d6d6] flex items-center pl-[6px] text-[#222]">
          <Icon w={12} h={14} className="text-[#555]"><circle cx="6" cy="4" r="3" strokeWidth="0.9" /><path d="M1 13.500v-2c0-2 2-3 5-3s5 1 5 3v2z" strokeWidth="0.9" /></Icon>
          <span className="ml-[9px]">Elakkiya T</span>
          <div className="ml-auto mr-[7px] w-0 h-0 border-x-[4px] border-x-transparent border-t-[5px] border-t-black" />
        </div>
        <div className="w-[26px] border-r border-[#d6d6d6]" />
        <div className="w-[28px] border-r border-[#d6d6d6]" />
        <div className="w-[46px] border-r border-[#d6d6d6]" />
        <div className="w-[71px] border-r border-[#d6d6d6] flex items-center justify-center gap-[7px]">
          <NavIcon d="M0 1h1.500v7H0zM8 1v7L2 4.500z" />
          <NavIcon d="M7 1v7L1 4.500z" />
          <NavIcon d="M2 1v7l6-3.500z" />
          <NavIcon d="M1 1v7l6-3.500zM7.500 1H9v7H7.500z" />
        </div>
        <div className="flex-1 w-[68px] flex items-center justify-center gap-[8px]">
          <div className="w-[11px] h-[11px] grid grid-cols-3 gap-[1px]">
            {Array.from({ length: 9 }).map((_, i) => <div key={i} className="bg-[#bbb]" />)}
          </div>
          <div className="w-[11px] h-[11px] flex flex-col gap-[1px]"><div className="h-[7px] bg-[#bbb]" /><div className="h-[3px] bg-[#bbb]" /></div>
          <div className="ml-[8px] w-[11px] h-[11px] bg-[#666]" />
        </div>
      </div>
    </div>
  );
}

function Badge({ n }: { n: string }) {
  return <div className="absolute left-[26px] top-[4px] w-[15px] h-[15px] rounded-full bg-[#2c5a87] text-[#e9eef4] text-[11px] leading-[15px] text-center">{n}</div>;
}

function TaskItem({ running, active, badge, children }: { running?: boolean; active?: boolean; badge?: string; children: ReactNode }) {
  return (
    <div className={"relative w-[44px] h-[40px] my-[4px] flex items-center justify-center rounded-[4px] " + (active ? "bg-[#2a3441]" : "")}>
      {children}
      {badge && <Badge n={badge} />}
      {running && <div className="absolute bottom-[1px] w-[6px] h-[3px] rounded-full bg-[#8a8f96]" />}
      {active && <div className="absolute bottom-[1px] w-[16px] h-[3px] rounded-full bg-[#5a8fc0]" />}
    </div>
  );
}

function Taskbar() {
  return (
    <div className={"h-[48px] bg-[#17222f] flex items-center text-white " + win}>
      <div className="ml-[22px] w-[20px] h-[20px] rounded-full bg-gradient-to-br from-[#f7b52b] to-[#ee6c0f]" />
      <div className="ml-[10px] flex flex-col text-[11.5px] leading-[16px]">
        <span>98°F</span>
        <span className="text-[#c9ced4]">Sunny</span>
      </div>
      <div className="ml-[226px] grid grid-cols-2 gap-[1px] w-[23px] h-[23px]">
        <div className="bg-[#5fd3fb] rounded-tl-[1px]" />
        <div className="bg-[#3ec0fa]" />
        <div className="bg-[#37bafa]" />
        <div className="bg-[#1a95f5] rounded-br-[1px]" />
      </div>
      <div className="ml-[16px] w-[100px] h-[32px] rounded-full bg-[#262f3b] flex items-center pl-[23px] text-[12px]">
        <Icon w={15} h={15}><circle cx="9" cy="6" r="4.800" strokeWidth="1.500" /><path d="M5.500 9.500L1.500 14" strokeWidth="1.800" /></Icon>
        <span className="ml-[5px]">Search</span>
      </div>
      <div className="ml-[3px] flex">
        <TaskItem>
          <svg width={24} height={22} viewBox="0 0 24 22"><rect x="0" y="8" width="15" height="14" rx="2" fill="#4d4d4d" /><rect x="8" y="0" width="15" height="15" rx="2" fill="#f4f4f4" /><rect x="8" y="8" width="7" height="7" fill="#a5a5a5" /></svg>
        </TaskItem>
        <TaskItem>
          <svg width={24} height={24} viewBox="0 0 24 24"><path d="M12 1a11 11 0 11-6 20l-5 2 1.500-5A11 11 0 0112 1z" fill="#6a5bc5" /><rect x="5.500" y="7.500" width="9" height="9" rx="2" fill="#fff" /><path d="M15.500 10.500l3.500-2v7l-3.500-2z" fill="#fff" /></svg>
        </TaskItem>
        <TaskItem>
          <svg width={24} height={24} viewBox="0 0 24 24">
            <defs><linearGradient id="edge" x1="0" y1="0" x2="1" y2="0.300"><stop offset="0" stopColor="#1488d8" /><stop offset="0.550" stopColor="#1fb0d8" /><stop offset="1" stopColor="#5fe07a" /></linearGradient></defs>
            <circle cx="12" cy="12" r="11.500" fill="#1270c4" />
            <path d="M12 .5C18 .5 23.500 5 23.500 11c0 4-3 6-6 6-2.500 0-4-1-4-2.500 1.500-1 1.500-6.500-2.500-7C6 7 2 10 .8 13 1 6 6 .5 12 .5z" fill="url(#edge)" />
            <path d="M6 14c0 5 5 9 9.500 9 3-.5 5-2 6-4-3 1.500-8 1.500-9.500-1.500C8.500 18 6.500 16 6 14z" fill="#0c4a9a" />
          </svg>
        </TaskItem>
        <TaskItem>
          <svg width={24} height={24} viewBox="0 0 24 24"><path d="M7 6V2.500h10V6" fill="none" stroke="#27a7e8" strokeWidth="1.800" /><rect x="1" y="6" width="22" height="17" rx="3" fill="#f3f3f3" /><rect x="7" y="9.500" width="4.500" height="4.500" fill="#e8552b" /><rect x="12.500" y="9.500" width="4.500" height="4.500" fill="#7cb82a" /><rect x="7" y="15" width="4.500" height="4.500" fill="#11a3e8" /><rect x="12.500" y="15" width="4.500" height="4.500" fill="#fbb715" /></svg>
        </TaskItem>
        <TaskItem badge="2">
          <svg width={24} height={22} viewBox="0 0 24 22"><path d="M0 6.500L12 0l12 6.500V22H0z" fill="#1283d4" /><path d="M4 4h16v9l-8 4-8-4z" fill="#fff" /><path d="M0 9l12 6 12-6v13H0z" fill="#2aa5e6" /></svg>
        </TaskItem>
        <TaskItem running>
          <svg width={24} height={22} viewBox="0 0 24 22"><path d="M0 2a2 2 0 012-2h7l3 3h10a2 2 0 012 2v4H0z" fill="#d89f13" /><rect x="0" y="4" width="24" height="18" rx="1.500" fill="#fbcf44" /><path d="M5 22v-4.500A2.500 2.500 0 017.500 15h9a2.500 2.500 0 012.500 2.500V22z" fill="#1877c9" /></svg>
        </TaskItem>
        <TaskItem>
          <svg width={22} height={24} viewBox="0 0 22 24" fill="none" stroke="#f2f2f2" strokeWidth="1.500"><path d="M11 1l9.500 5.500v6M1.500 12.500V6.500L11 1M1.500 15v2.500L11 23l9.500-5.500V15" /><path d="M11 6l6 3.500v6L11 19l-6-3.500v-6zM5 9.500l6 3.500 6-3.500M11 13v6" strokeWidth="1.200" /></svg>
        </TaskItem>
        <TaskItem running>
          <div className="relative">
            <svg width={24} height={24} viewBox="0 0 24 24"><circle cx="12" cy="12" r="11.500" fill="#e33b2e" /><path d="M12 12L23.500 12A11.500 11.500 0 0112 23.500z" fill="#fbc116" /><path d="M12 12v11.500A11.500 11.500 0 012 6z" fill="#2da94f" /><circle cx="12" cy="12" r="6" fill="#fff" /><circle cx="12" cy="12" r="4.700" fill="#3b82e8" /></svg>
            <div className="absolute -right-[5px] -top-[5px] w-[15px] h-[15px] rounded-full bg-white flex items-center justify-center">
              <div className="w-[11px] h-[11px] rounded-full bg-gradient-to-b from-[#5b7a94] to-[#3a8fb0]" />
            </div>
          </div>
        </TaskItem>
        <TaskItem>
          <svg width={22} height={24} viewBox="0 0 22 24"><path d="M11 0l11 6.500V17l-5 3-6-4-3-2V7z" fill="#2b7fd4" /><path d="M11 0v5L5 9 0 7z" fill="#6a5cd0" /><path d="M0 7l5 2v7l12 5-6 3-11-6.500z" fill="#8a5bd6" /><path d="M17 9v9l5-2V7z" fill="#35c1e8" /><path d="M6 10l5-3 5 3v5l-5 3-5-3z" fill="#17222f" /></svg>
        </TaskItem>
        <TaskItem>
          <div className="w-[24px] h-[18px] bg-[#2a2a2a] border border-[#6e6e6e] rounded-[1px] text-[6px] leading-[8px] text-[#999] pl-[3px] font-mono">C:\_</div>
        </TaskItem>
        <TaskItem running badge="4">
          <div className="w-[24px] h-[24px] flex items-center justify-center text-white relative">
            <div className="absolute inset-[3px] rounded-full bg-[#25b04b]" />
            <FaWhatsapp size={24} className="relative" />
          </div>
        </TaskItem>
        <TaskItem>
          <svg width={22} height={23} viewBox="0 0 22 23"><path d="M1 12v8h5M16 1h5v5" fill="none" stroke="#3e9a3e" strokeWidth="1.500" /><ellipse cx="8" cy="3" rx="7" ry="3" fill="#f2d14f" /><path d="M1 3v13c0 1.500 3 3 7 3s7-1.500 7-3V3z" fill="#f0c93b" /><path d="M9 9l12 11M21 9L10 20" stroke="#e8731c" strokeWidth="2.400" /></svg>
        </TaskItem>
        <TaskItem active>
          <div className="w-[22px] h-[22px] bg-[#f4f6f7] flex items-center justify-center"><TableauMark size={20} color="#4b8fc0" /></div>
        </TaskItem>
        <TaskItem running>
          <svg width={24} height={24} viewBox="0 0 24 24"><path d="M17 0l7 3v18l-7 3-10-9.500L2 18l-2-1.500V7.500L2 6l5 3.500z" fill="#8661c5" /><path d="M17 6.500L10 12l7 5.500z" fill="#17222f" /><path d="M2.500 9l2.500 3-2.500 3z" fill="#17222f" /><path d="M17 0l7 3v18l-7 3z" fill="#a982de" /></svg>
        </TaskItem>
      </div>
      <div className="ml-auto flex items-center">
        <Icon w={12} h={7} className="text-[#eee]"><path d="M1 6.500L6 1.500l5 5" strokeWidth="1.200" /></Icon>
        <div className="relative ml-[9px] w-[16px] h-[12px]">
          <div className="absolute left-0 bottom-[1px] w-[14px] h-[8px] rounded-full bg-[#9a9ea3]" />
          <div className="absolute -right-[1px] -bottom-[3px] w-[9px] h-[9px] rounded-full bg-[#e0263a]" />
        </div>
        <Icon w={17} h={13} className="ml-[11px] text-[#eee]"><path d="M1 5a11 11 0 0115 0M3.500 7.500a7.500 7.500 0 0110 0M6 10a3.500 3.500 0 015 0" strokeWidth="1.100" /><circle cx="8.500" cy="12" r="1" fill="#eee" stroke="none" /></Icon>
        <Icon w={17} h={14} className="ml-[6px] text-[#eee]"><path d="M1 5h2.500L7 1.500v11L3.500 9H1zM10 4.500a3.500 3.500 0 010 5M12 2.500a6.500 6.500 0 010 9" strokeWidth="1" /></Icon>
        <Icon w={17} h={11} className="ml-[8px] text-[#eee]"><rect x=".5" y="1" width="14" height="9" rx="2" strokeWidth="1" /><path d="M2.500 3v5" strokeWidth="1.500" /><path d="M16 4v3" strokeWidth="1.200" /></Icon>
        <div className="ml-[10px] w-[58px] flex flex-col items-end text-[11.5px] leading-[16px] text-[#f2f2f2]">
          <span>5:58 PM</span>
          <span>4/19/2023</span>
        </div>
        <div className="ml-[9px] mr-[20px] w-[15px] h-[15px] rounded-full bg-[#2c5a87] text-[11px] leading-[15px] text-center">1</div>
      </div>
    </div>
  );
}

export default function App() {
  return (
    <div className="w-[1366px] h-[768px] overflow-hidden flex flex-col bg-[#f5f5f5]">
      <TitleBar />
      <MenuBar />
      <Toolbar />
      <div className="h-[586px] flex items-stretch overflow-hidden">
        <DataPane />
        <ShelfPanel />
        <Workspace />
      </div>
      <TabStrip />
      <StatusBar />
      <Taskbar />
    </div>
  );
}
